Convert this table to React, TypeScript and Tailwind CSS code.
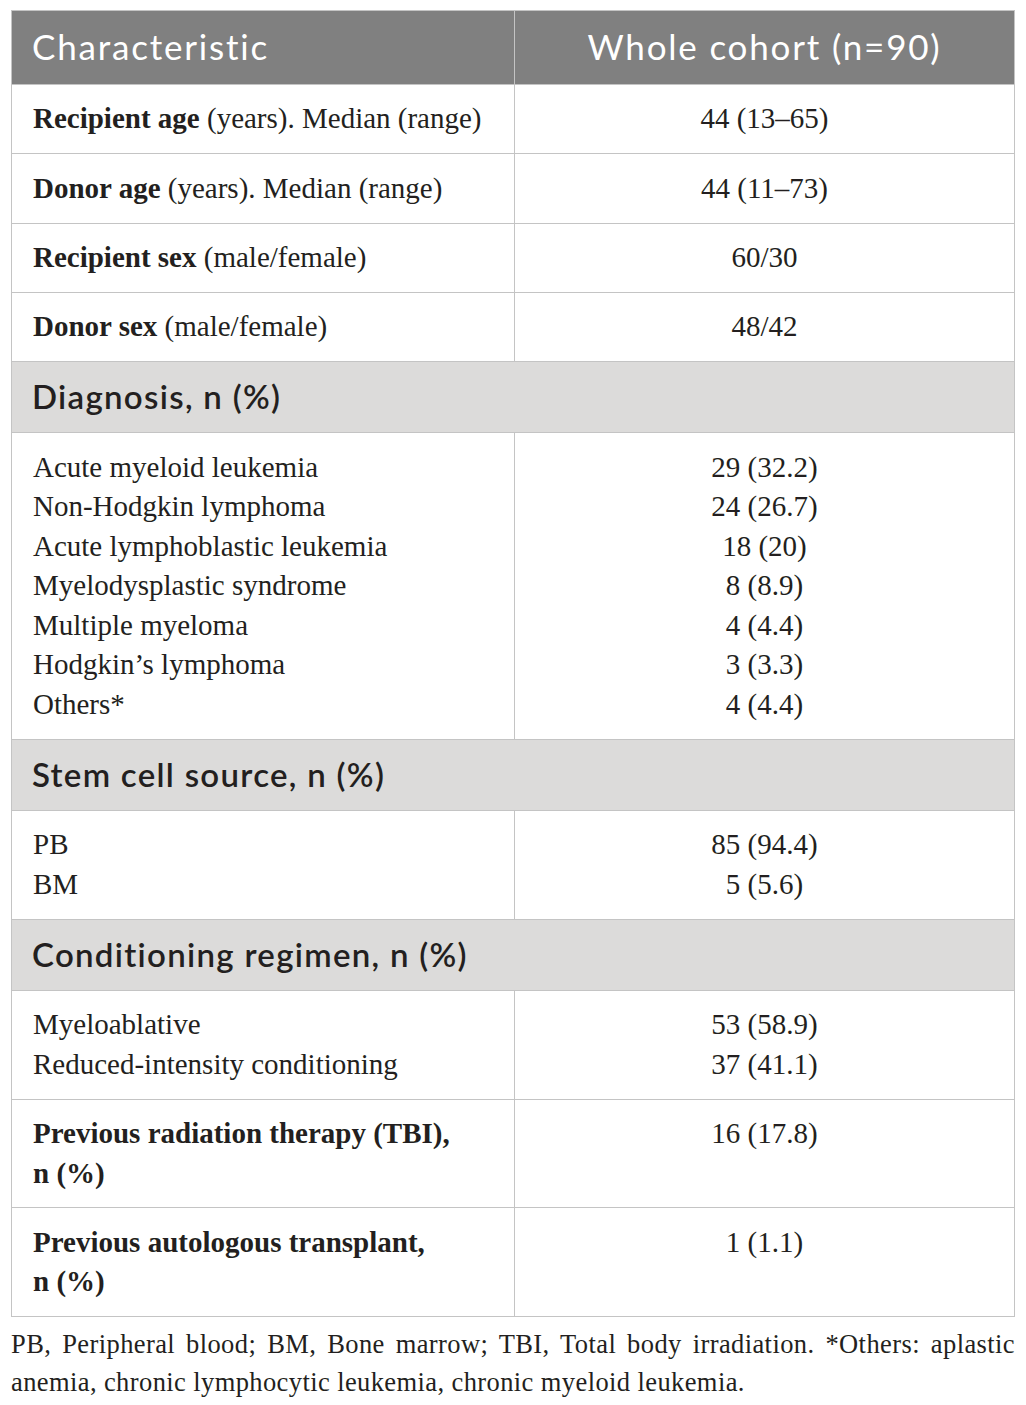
import React from "react";

type Row =
  | { kind: "item"; label: React.ReactNode; value: React.ReactNode }
  | { kind: "section"; title: string }
  | { kind: "list"; labels: string[]; values: string[] };

const rows: Row[] = [
  {
    kind: "item",
    label: (
      <>
        <b>Recipient age</b> (years). Median (range)
      </>
    ),
    value: "44 (13–65)",
  },
  {
    kind: "item",
    label: (
      <>
        <b>Donor age</b> (years). Median (range)
      </>
    ),
    value: "44 (11–73)",
  },
  {
    kind: "item",
    label: (
      <>
        <b>Recipient sex</b> (male/female)
      </>
    ),
    value: "60/30",
  },
  {
    kind: "item",
    label: (
      <>
        <b>Donor sex</b> (male/female)
      </>
    ),
    value: "48/42",
  },
  { kind: "section", title: "Diagnosis, n (%)" },
  {
    kind: "list",
    labels: [
      "Acute myeloid leukemia",
      "Non-Hodgkin lymphoma",
      "Acute lymphoblastic leukemia",
      "Myelodysplastic syndrome",
      "Multiple myeloma",
      "Hodgkin’s lymphoma",
      "Others*",
    ],
    values: ["29 (32.2)", "24 (26.7)", "18 (20)", "8 (8.9)", "4 (4.4)", "3 (3.3)", "4 (4.4)"],
  },
  { kind: "section", title: "Stem cell source, n (%)" },
  { kind: "list", labels: ["PB", "BM"], values: ["85 (94.4)", "5 (5.6)"] },
  { kind: "section", title: "Conditioning regimen, n (%)" },
  {
    kind: "list",
    labels: ["Myeloablative", "Reduced-intensity conditioning"],
    values: ["53 (58.9)", "37 (41.1)"],
  },
  {
    kind: "item",
    label: (
      <b>
        Previous radiation therapy (TBI),
        <br />n (%)
      </b>
    ),
    value: "16 (17.8)",
  },
  {
    kind: "item",
    label: (
      <b>
        Previous autologous transplant,
        <br />n (%)
      </b>
    ),
    value: "1 (1.1)",
  },
];

const serif = "font-['Liberation_Serif',serif]";
const sans = "font-['Lato','Open_Sans',sans-serif]";

export default function App() {
  return (
    <div className="w-[1026px] h-[1405px] bg-white px-[11px] pt-[10px] text-[#231f20]">
      <table className="w-full border-collapse border border-[#c4c4c4] table-fixed">
        <colgroup>
          <col className="w-[503px]" />
          <col />
        </colgroup>
        <thead>
          <tr className="bg-[#808080] text-white h-[74px]">
            <th className={`${sans} text-[35px] tracking-[1.8px] font-normal text-left pl-[20px] pb-[3px] border border-[#c4c4c4]`}>
              Characteristic
            </th>
            <th className={`${sans} text-[35px] tracking-[1.8px] font-normal text-center pb-[3px] border border-[#c4c4c4]`}>
              Whole cohort (n=90)
            </th>
          </tr>
        </thead>
        <tbody className={`${serif} text-[29px] leading-[39.5px]`}>
          {rows.map((r, i) => {
            if (r.kind === "section") {
              return (
                <tr key={i} className="bg-[#dcdbda] h-[71px]">
                  <td
                    colSpan={2}
                    className={`${sans} text-[33px] tracking-[1.3px] font-semibold text-[#231f20] pl-[20px] border border-[#c4c4c4]`}
                  >
                    {r.title}
                  </td>
                </tr>
              );
            }
            if (r.kind === "list") {
              return (
                <tr key={i}>
                  <td className="pl-[21px] py-[14.5px] border border-[#c4c4c4] align-top">
                    {r.labels.map((l) => (
                      <div key={l}>{l}</div>
                    ))}
                  </td>
                  <td className="py-[14.5px] border border-[#c4c4c4] text-center align-top">
                    {r.values.map((v, j) => (
                      <div key={j}>{v}</div>
                    ))}
                  </td>
                </tr>
              );
            }
            return (
              <tr key={i}>
                <td className="pl-[21px] py-[14.4px] border border-[#c4c4c4] align-top">{r.label}</td>
                <td className="py-[14.4px] border border-[#c4c4c4] text-center align-top">{r.value}</td>
              </tr>
            );
          })}
        </tbody>
      </table>
      <div className={`${serif} text-[26.5px] tracking-[0.4px] leading-[38px] mt-[8px]`}>
        <div className="text-justify [text-align-last:justify]">
          PB, Peripheral blood; BM, Bone marrow; TBI, Total body irradiation. *Others: aplastic
        </div>
        <div>anemia, chronic lymphocytic leukemia, chronic myeloid leukemia.</div>
      </div>
    </div>
  );
}
